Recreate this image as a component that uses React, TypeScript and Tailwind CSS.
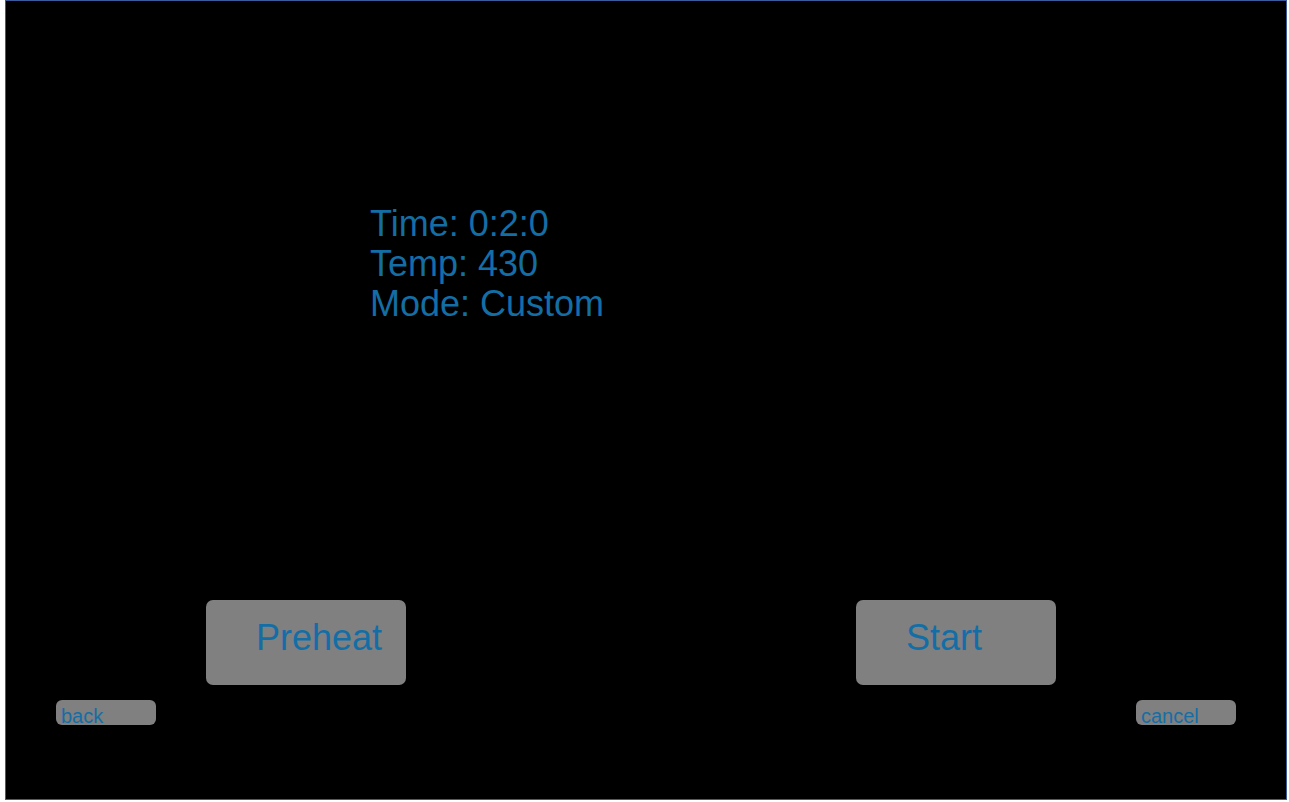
import React from 'react';

const info = ['Time: 0:2:0', 'Temp: 430', 'Mode: Custom'];

export default function App() {
  return (
    <div className="min-h-screen bg-white" style={{ fontFamily: '"Liberation Sans", Arial, sans-serif' }}>
      <div className="ml-[5px] w-[1282px] h-[800px] border border-[#3b5c9c] bg-black flex flex-col text-[#146ea6]">
        {/* readout */}
        <div className="mt-[203px] ml-[364px] text-[36px] leading-[40px]">
          {info.map((line) => (
            <div key={line}>{line}</div>
          ))}
        </div>

        {/* main actions */}
        <div className="mt-[276px] flex">
          <div className="ml-[200px] w-[200px] h-[85px] rounded-[7px] bg-[#808080] pt-[18px] pl-[50px] text-[36px] leading-[40px]">
            Preheat
          </div>
          <div className="ml-[450px] w-[200px] h-[85px] rounded-[7px] bg-[#808080] pt-[18px] pl-[50px] text-[36px] leading-[40px]">
            Start
          </div>
        </div>

        {/* nav */}
        <div className="mt-[15px] flex">
          <div className="ml-[50px] w-[100px] h-[25px] rounded-[6px] bg-[#808080] pt-[5px] pl-[5px] text-[20px] leading-[23px]">
            back
          </div>
          <div className="ml-[980px] w-[100px] h-[25px] rounded-[6px] bg-[#808080] pt-[5px] pl-[5px] text-[20px] leading-[23px]">
            cancel
          </div>
        </div>
      </div>
    </div>
  );
}
